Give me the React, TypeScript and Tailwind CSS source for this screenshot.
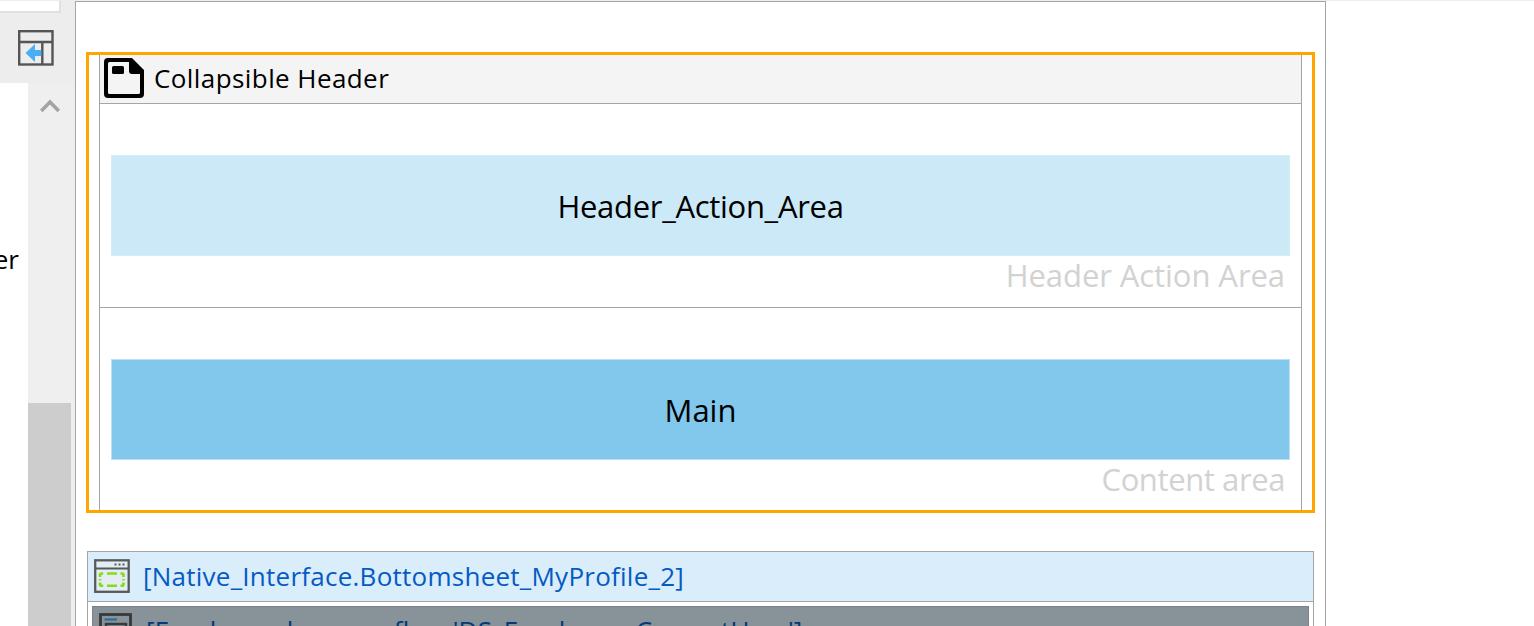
import type { ReactNode } from 'react';

function DockIcon() {
  return (
    <svg width="36" height="36" viewBox="0 0 36 36" fill="none">
      <rect x="1.2" y="1.2" width="33.3" height="33.3" stroke="#555557" strokeWidth="2.4" />
      <path d="M1 12H35M24.3 12V35" stroke="#555557" strokeWidth="2.4" />
      <path d="M7.500 23L17 14V20H23.300V26H17V32Z" fill="#48aff5" />
    </svg>
  );
}

function PageIcon() {
  return (
    <svg width="40" height="40" viewBox="0 0 40 40">
      <path
        fillRule="evenodd"
        fill="#000"
        d="M3 0H28L40 12V36Q40 40 36 40H4Q0 40 0 36V4Q0 0 4 0ZM5.500 4Q4 4 4 5.500V34.500Q4 36 5.500 36H34.500Q36 36 36 34.500V16H28Q25 16 25 13V4Z"
      />
      <rect x="8" y="8" width="12" height="8" rx="1.500" fill="#000" />
    </svg>
  );
}

function BlockIcon() {
  return (
    <svg width="36" height="34" viewBox="0 0 36 34" fill="none">
      <rect x="1.200" y="1.300" width="33.500" height="31.500" fill="#e2edf4" stroke="#58595b" strokeWidth="2.300" />
      <path d="M1 9.500H35" stroke="#58595b" strokeWidth="2" />
      <path d="M20.500 5.500h2M24.500 5.500h2M28.500 5.500h2" stroke="#58595b" strokeWidth="1.800" />
      <path
        d="M13 14.500H23M13 26.800H23M9.200 14.500H7.500Q6 14.500 6 16V18M26.500 14.500H28Q29.500 14.500 29.500 16V18M9.200 26.800H7.500Q6 26.800 6 25.300V23.500M26.500 26.800H28Q29.500 26.800 29.500 25.300V23.500M6 20V21.500M29.500 20V21.500"
        stroke="#84dc16"
        strokeWidth="2.600"
      />
    </svg>
  );
}

function ListIcon() {
  return (
    <svg width="33" height="34" viewBox="0 0 33 34" fill="none">
      <rect x="1.500" y="1.500" width="30" height="31" fill="#879399" stroke="#38393b" strokeWidth="2.800" />
      <path d="M5.500 6.500H18" stroke="#286f9f" strokeWidth="2.200" />
      <path d="M7 32V11H27V32" stroke="#38393b" strokeWidth="2.500" />
    </svg>
  );
}

function Placeholder({ name, label, box, edge }: { name: ReactNode; label: ReactNode; box: string; edge: string }) {
  return (
    <section className={`flex h-[204px] shrink-0 flex-col px-[11px] pt-[51px] ${edge}`}>
      <div className={`flex h-[101px] shrink-0 items-center justify-center border text-[31px] leading-[42px] ${box}`}>
        {name}
      </div>
      <div className="-mt-0.5 pr-[5px] text-right text-[31px] leading-[42px] text-[#d2d2d2]">{label}</div>
    </section>
  );
}

export default function App() {
  return (
    <div className="flex h-[626px] w-[1534px] overflow-hidden whitespace-nowrap border-t border-[#ededed] bg-white font-['Open_Sans','Noto_Sans',sans-serif] text-black">
      <aside className="flex w-[75px] shrink-0 flex-col bg-[#efefef]">
        <div className="h-[82px] shrink-0 bg-[#ededed]">
          <div className="-mt-px h-[13px] w-[61px] border-b-2 border-r-2 border-[#e0e0e0] bg-white" />
          <div className="pl-[18px] pt-[17px]">
            <DockIcon />
          </div>
        </div>
        <div className="flex grow">
          <div className="flex w-7 justify-end overflow-hidden bg-white pr-[9px] pt-[156px] text-[26px] leading-10">
            <span>er</span>
          </div>
          <div className="flex w-[43px] flex-col">
            <div className="h-[320px] shrink-0 pl-3 pt-[15px]">
              <svg width="20" height="15" viewBox="0 0 20 15" fill="none">
                <path d="M1.200 13L10 4L18.800 13" stroke="#a3a3a3" strokeWidth="3.600" />
              </svg>
            </div>
            <div className="grow bg-[#cdcdcd]" />
          </div>
        </div>
      </aside>
      <main className="flex w-[1251px] shrink-0 flex-col border-x border-t border-[#a5a5a5] px-2.5">
        <div className="mt-[50px] h-[461px] shrink-0 border-[3px] border-[#ffa500] px-2.5">
          <div className="flex h-[455px] flex-col overflow-hidden border-x border-[#a5a5a5]">
            <header className="flex h-[49px] shrink-0 items-center border-b border-[#a5a5a5] bg-[#f4f4f4] pb-0.5 pl-1">
              <PageIcon />
              <span className="ml-2.5 text-[26px] leading-9 tracking-[0.42px]">Collapsible Header</span>
            </header>
            <Placeholder
              name={<span className="tracking-[-0.3px]">Header_Action_Area</span>}
              label={<span className="tracking-[-0.07px]">Header Action Area</span>}
              box="border-[#d3edf9] bg-[#cbe9f7]"
              edge="border-b border-[#a5a5a5]"
            />
            <Placeholder
              name={<span>Main</span>}
              label={<span className="tracking-[-0.4px]">Content area</span>}
              box="border-[#b9e0f4] bg-[#82c8ec]"
              edge=""
            />
          </div>
        </div>
        <div className="ml-px mt-[38px] h-[120px] w-[1227px] shrink-0 border border-[#a5a5a5]">
          <div className="flex h-[50px] items-center border-b border-[#a5a5a5] bg-[#d9edfb] pb-0.5 pl-1.5 text-[26px] leading-9 text-[#055ac3]">
            <BlockIcon />
            <span className="ml-[13px] tracking-[0.25px]">[Native_Interface.Bottomsheet_MyProfile_2]</span>
          </div>
          <div className="mx-1 mt-1 flex h-[60px] border border-[#7e8284] bg-[#879399] pl-1.5 pt-1.5 text-[26px] leading-9 text-[#043a76]">
            <ListIcon />
            <span className="-mt-px ml-[14px] tracking-[0.2px]">[Employee_laneoverflow.'DS_Employee_CurrentUser']</span>
          </div>
        </div>
      </main>
    </div>
  );
}
